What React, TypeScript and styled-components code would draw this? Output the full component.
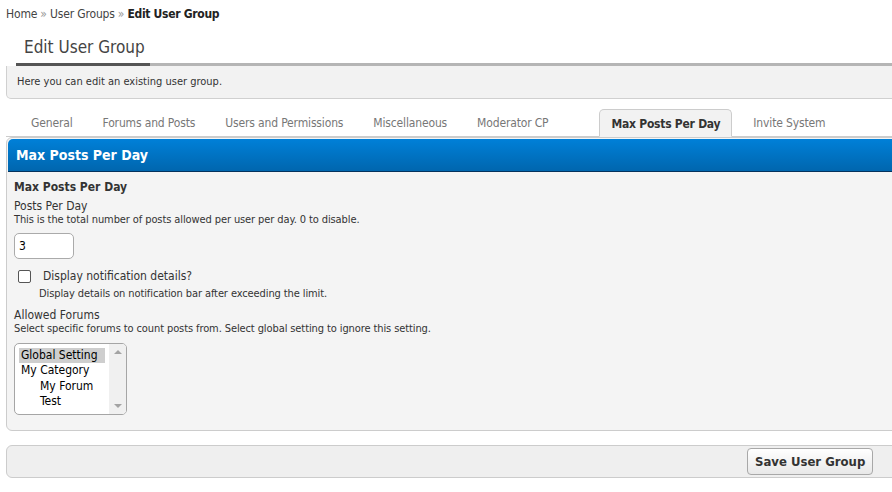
import React from "react";
import styled, { createGlobalStyle } from "styled-components";

const Global = createGlobalStyle`
  html, body { margin: 0; padding: 0; background: #fff; }
  body {
    font-family: "DejaVu Sans Condensed", "DejaVu Sans", sans-serif;
    font-size: 12px;
    color: #333;
    overflow: hidden;
  }
`;

const Page = styled.div`
  width: 900px;
  padding: 6px 0 0 6px;
`;

const Breadcrumb = styled.div`
  font-size: 12px;
  line-height: 16px;
  color: #444;
  a { color: #444; text-decoration: none; letter-spacing: -0.15px; }
  span.sep { color: #999; padding: 0 3px; }
  b { color: #222; letter-spacing: -0.3px; }
`;

const TitleWrap = styled.div`
  margin-top: 14px;
  padding-left: 10px;
`;

const Title = styled.h2`
  margin: 0;
  padding: 0 8px 5px;
  display: inline-block;
  font-size: 17px;
  font-weight: normal;
  color: #444;
  line-height: 22px;
`;

const TitleBar = styled.div`
  height: 3px;
  background: #b5b5b5;
  margin-left: 10px;
  display: flex;
`;

const TitleBarDark = styled.div`
  width: 134px;
  background: #555;
`;

const Desc = styled.div`
  background: #f2f2f2;
  border: 1px solid #d0d0d0;
  border-top: none;
  border-radius: 0 0 0 5px;
  padding: 9px 10px 10px;
  font-size: 11px;
  line-height: 13px;
  color: #333;
`;

const Tabs = styled.ul`
  list-style: none;
  margin: 9px 0 0;
  padding: 0 0 0 10px;
  display: flex;
  align-items: flex-end;
  height: 28px;
  border-bottom: 1px solid #ccc;
`;

const Tab = styled.li<{ $active?: boolean }>`
  height: 28px;
  line-height: 28px;
  padding: 0 ${(p) => (p.$active ? "11px" : "14px")};
  margin: ${(p) => (p.$active ? "0 6px -1px 36px" : "0")};
  font-size: 12px;
  letter-spacing: ${(p) => (p.$active ? "-0.25px" : "-0.15px")};
  color: ${(p) => (p.$active ? "#333" : "#777")};
  font-weight: ${(p) => (p.$active ? "bold" : "normal")};
  background: ${(p) => (p.$active ? "#f2f2f2" : "transparent")};
  border: ${(p) => (p.$active ? "1px solid #ccc" : "1px solid transparent")};
  border-bottom: ${(p) => (p.$active ? "1px solid #f2f2f2" : "none")};
  border-radius: 5px 5px 0 0;
  box-sizing: border-box;
  white-space: nowrap;
`;

const Panel = styled.div`
  background: #f4f4f4;
  border: 1px solid #ccc;
  border-radius: 6px 0 0 6px;
  padding: 1px 0 0 1px;
`;

const PanelHead = styled.div`
  background: linear-gradient(#0080d8, #0066ae);
  border-bottom: 1px solid #05325c;
  border-radius: 5px 0 0 0;
  height: 32px;
  line-height: 32px;
  padding-left: 8px;
  color: #fff;
  font-weight: bold;
  font-size: 14px;
`;

const PanelBody = styled.div`
  padding: 7px 6px 15px;
`;

const SectionTitle = styled.div`
  font-weight: bold;
  font-size: 12px;
  line-height: 16px;
  margin-bottom: 5px;
`;

const Label = styled.div`
  font-size: 12px;
  line-height: 13px;
`;

const Help = styled.div<{ $indent?: number; $gap?: number }>`
  font-size: 11px;
  line-height: 13px;
  letter-spacing: -0.1px;
  padding-left: ${(p) => p.$indent || 0}px;
  margin-top: ${(p) => p.$gap || 0}px;
`;

const TextInput = styled.input`
  display: block;
  margin: 7px 0 0;
  width: 60px;
  height: 26px;
  box-sizing: border-box;
  border: 1px solid #aaa;
  border-radius: 5px;
  background: #fff;
  padding: 0 4px;
  font-family: inherit;
  font-size: 12px;
  color: #000;
  outline: none;
`;

const CheckRow = styled.label`
  display: flex;
  align-items: center;
  margin-top: 9px;
  padding-left: 4px;
  font-size: 12px;
  line-height: 16px;
`;

const Check = styled.span`
  width: 13px;
  height: 13px;
  box-sizing: border-box;
  border: 1px solid #555;
  border-radius: 2px;
  background: #fff;
  margin-right: 12px;
`;

const Group = styled.div`
  margin-top: 9px;
`;

const SelectBox = styled.div`
  margin-top: 8px;
  width: 113px;
  height: 72px;
  box-sizing: border-box;
  border: 1px solid #a5a5a5;
  border-radius: 5px;
  background: #fff;
  display: flex;
  overflow: hidden;
`;

const Options = styled.div`
  flex: 1;
  padding: 4px 0 0 4px;
`;

const Option = styled.div<{ $selected?: boolean; $indent?: boolean }>`
  font-size: 12px;
  line-height: 15.3px;
  color: #000;
  padding-left: ${(p) => (p.$indent ? "21px" : "2px")};
  background: ${(p) => (p.$selected ? "#cecece" : "transparent")};
  width: 86px;
  box-sizing: border-box;
  white-space: nowrap;
`;

const Scroll = styled.div`
  width: 17px;
  background: #f0f0f0;
  display: flex;
  flex-direction: column;
  justify-content: space-between;
  align-items: center;
  padding: 6px 0;
  box-sizing: border-box;
`;

const Arrow = styled.span<{ $down?: boolean }>`
  width: 0;
  height: 0;
  border-left: 4px solid transparent;
  border-right: 4px solid transparent;
  ${(p) => (p.$down ? "border-top: 4px solid #a3a3a3;" : "border-bottom: 4px solid #a3a3a3;")}
`;

const Footer = styled.div`
  margin-top: 14px;
  height: 33px;
  box-sizing: border-box;
  background: #efefef;
  border: 1px solid #ccc;
  border-radius: 6px 0 0 6px;
  display: flex;
  align-items: center;
  padding-left: 740px;
`;

const Button = styled.button`
  height: 27px;
  padding: 0 7px;
  border: 1px solid #a8a8a8;
  border-radius: 4px;
  background: linear-gradient(#ffffff, #e8e8e8);
  font-family: inherit;
  font-weight: bold;
  font-size: 13px;
  color: #333;
`;

export default function App() {
  return (
    <>
      <Global />
      <Page>
        <Breadcrumb>
          <a>Home</a>
          <span className="sep">»</span>
          <a>User Groups</a>
          <span className="sep">»</span>
          <b>Edit User Group</b>
        </Breadcrumb>
        <TitleWrap>
          <Title>Edit User Group</Title>
        </TitleWrap>
        <TitleBar>
          <TitleBarDark />
        </TitleBar>
        <Desc>Here you can edit an existing user group.</Desc>
        <Tabs>
          <Tab>General</Tab>
          <Tab>Forums and Posts</Tab>
          <Tab>Users and Permissions</Tab>
          <Tab>Miscellaneous</Tab>
          <Tab>Moderator CP</Tab>
          <Tab $active>Max Posts Per Day</Tab>
          <Tab>Invite System</Tab>
        </Tabs>
        <Panel>
          <PanelHead>Max Posts Per Day</PanelHead>
          <PanelBody>
            <SectionTitle>Max Posts Per Day</SectionTitle>
            <Label>Posts Per Day</Label>
            <Help>This is the total number of posts allowed per user per day. 0 to disable.</Help>
            <TextInput defaultValue="3" />
            <CheckRow>
              <Check />
              Display notification details?
            </CheckRow>
            <Help $indent={25} $gap={3}>
              Display details on notification bar after exceeding the limit.
            </Help>
            <Group>
              <Label>Allowed Forums</Label>
              <Help>Select specific forums to count posts from. Select global setting to ignore this setting.</Help>
              <SelectBox>
                <Options>
                  <Option $selected>Global Setting</Option>
                  <Option>My Category</Option>
                  <Option $indent>My Forum</Option>
                  <Option $indent>Test</Option>
                </Options>
                <Scroll>
                  <Arrow />
                  <Arrow $down />
                </Scroll>
              </SelectBox>
            </Group>
          </PanelBody>
        </Panel>
        <Footer>
          <Button>Save User Group</Button>
        </Footer>
      </Page>
    </>
  );
}
